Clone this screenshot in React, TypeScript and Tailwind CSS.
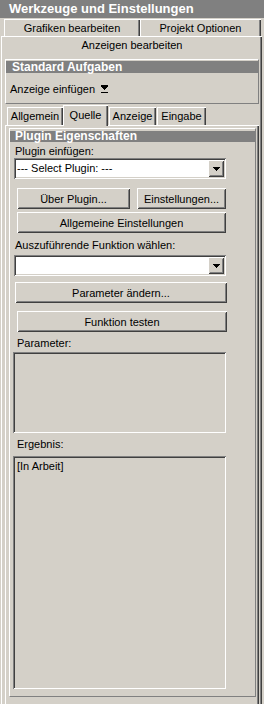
import React from "react";

const raised =
  "shadow-[inset_1px_1px_0_#ffffff,inset_-1px_-1px_0_#404040,inset_2px_2px_0_#d4d0c8,inset_-2px_-2px_0_#808080]";
const sunken =
  "shadow-[inset_1px_1px_0_#808080,inset_-1px_-1px_0_#ffffff,inset_2px_2px_0_#404040,inset_-2px_-2px_0_#d4d0c8]";
const tabShadow =
  "shadow-[inset_1px_1px_0_#ffffff,inset_-1px_0_0_#404040,inset_-2px_0_0_#808080]";

function DownGlyph() {
  return (
    <svg width="7" height="4" viewBox="0 0 7 4" shapeRendering="crispEdges">
      <rect x="0" y="0" width="7" height="1" fill="#000" />
      <rect x="1" y="1" width="5" height="1" fill="#000" />
      <rect x="2" y="2" width="3" height="1" fill="#000" />
      <rect x="3" y="3" width="1" height="1" fill="#000" />
    </svg>
  );
}

function Combo({ text }: { text?: string }) {
  return (
    <div className={`ml-[4px] w-[212px] h-[21px] bg-white flex items-center p-[2px] ${sunken}`}>
      <div className="flex-1 pl-[1px] leading-[17px] whitespace-nowrap">{text ?? ""}</div>
      <div className={`w-[16px] h-[17px] bg-[#d4d0c8] flex items-center justify-center ${raised}`}>
        <DownGlyph />
      </div>
    </div>
  );
}

function Button({ cls, children }: { cls: string; children: React.ReactNode }) {
  return (
    <div className={`h-[21px] bg-[#d4d0c8] flex items-center justify-center leading-[14px] whitespace-nowrap ${raised} ${cls}`}>
      {children}
    </div>
  );
}

export default function App() {
  return (
    <div className="w-[264px] h-[704px] overflow-hidden bg-[#d4d0c8] text-black text-[11px] leading-[14px] font-['Liberation_Sans',Arial,sans-serif]">
      {/* Title */}
      <div className="h-[18px] bg-[#808080] pl-[9px] text-white font-bold text-[13px] leading-[18px] whitespace-nowrap">
        Werkzeuge und Einstellungen
      </div>

      {/* First tab row */}
      <div className="flex h-[18px] pt-[1px] pl-[4px]">
        <div className={`w-[136px] h-[17px] pt-[2px] text-center leading-[15px] ${tabShadow}`}>Grafiken bearbeiten</div>
        <div className={`w-[121px] h-[17px] pt-[2px] text-center leading-[15px] ${tabShadow}`}>Projekt Optionen</div>
      </div>

      {/* Outer panel */}
      <div className="ml-[1px] w-[261px] h-[668px] border-l border-t border-white shadow-[inset_-1px_0_0_#404040,inset_-2px_0_0_#808080]">
        <div className="h-[17px] leading-[17px] text-center">Anzeigen bearbeiten</div>

        <div className="pl-[3px] pr-[3px]">
          {/* Standard Aufgaben */}
          <div className="mt-[5px] h-[45px] border border-white border-r-[#808080] border-b-[#808080] pt-[1px]">
            <div className="h-[12px] bg-[#808080] pl-[6px] text-white font-bold text-[12px] leading-[12px] whitespace-nowrap">
              Standard Aufgaben
            </div>
            <div className="mt-[9px] pl-[4px] flex items-center">
              <span>Anzeige einfügen</span>
              <svg className="ml-[6px]" width="7" height="8" viewBox="0 0 7 8" shapeRendering="crispEdges">
                <rect x="0" y="0" width="7" height="1" fill="#000" />
                <rect x="0" y="1" width="7" height="1" fill="#000" />
                <rect x="1" y="2" width="5" height="1" fill="#000" />
                <rect x="2" y="3" width="3" height="1" fill="#000" />
                <rect x="3" y="4" width="1" height="1" fill="#000" />
                <rect x="0" y="7" width="7" height="1" fill="#000" />
              </svg>
            </div>
          </div>

          {/* Inner tab strip */}
          <div className="mt-[1px] h-[20px] pl-[2px] flex items-end">
            <div className={`w-[56px] h-[18px] flex items-center justify-center ${tabShadow}`}>Allgemein</div>
            <div className={`relative z-10 w-[45px] h-[21px] -mb-[1px] pb-[2px] bg-[#d4d0c8] flex items-center justify-center ${tabShadow}`}>
              Quelle
            </div>
            <div className={`ml-[1px] w-[47px] h-[18px] flex items-center justify-center ${tabShadow}`}>Anzeige</div>
            <div className={`ml-[1px] w-[49px] h-[18px] flex items-center justify-center ${tabShadow}`}>Eingabe</div>
          </div>

          {/* Inner panel */}
          <div className="h-[600px] border-l border-t border-white shadow-[inset_-1px_0_0_#404040,inset_-2px_0_0_#808080] pt-[2px] pl-[3px] pr-[3px]">
            {/* Group box */}
            <div className="h-[569px] border border-white border-r-[#808080] border-b-[#808080] flex flex-col">
              <div className="mt-[2px] h-[11px] bg-[#808080] pl-[5px] text-white font-bold text-[12px] leading-[11px] whitespace-nowrap">
                Plugin Eigenschaften
              </div>
              <div className="mt-[2px] ml-[5px]">Plugin einfügen:</div>
              <Combo text="--- Select Plugin: ---" />
              <div className="mt-[9px] flex">
                <Button cls="ml-[7px] w-[113px]">Über Plugin...</Button>
                <Button cls="ml-[7px] w-[89px]">Einstellungen...</Button>
              </div>
              <Button cls="mt-[3px] ml-[7px] w-[209px]">Allgemeine Einstellungen</Button>
              <div className="mt-[5px] ml-[5px]">Auszuführende Funktion wählen:</div>
              <div className="mt-[3px]">
                <Combo />
              </div>
              <Button cls="mt-[6px] ml-[5px] w-[212px]">Parameter ändern...</Button>
              <Button cls="mt-[8px] ml-[7px] w-[210px]">Funktion testen</Button>
              <div className="mt-[4px] ml-[7px]">Parameter:</div>
              <div className={`mt-[2px] ml-[3px] w-[213px] h-[81px] ${sunken}`} />
              <div className="mt-[4px] ml-[7px]">Ergebnis:</div>
              <div className={`mt-[5px] ml-[3px] w-[213px] h-[233px] pt-[3px] pl-[4px] ${sunken}`}>[In Arbeit]</div>
            </div>
          </div>
        </div>
      </div>
    </div>
  );
}
